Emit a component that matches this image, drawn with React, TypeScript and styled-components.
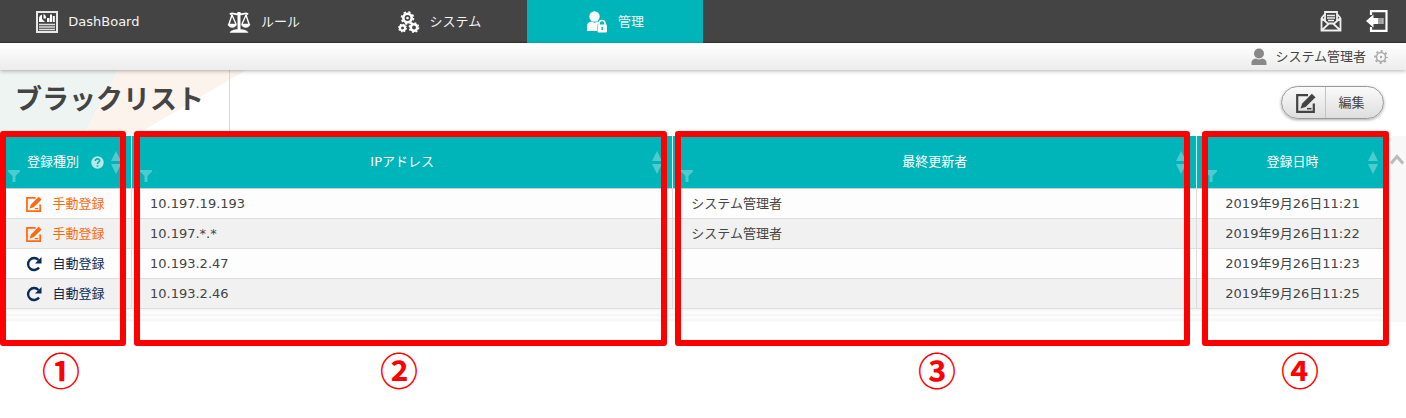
import React from 'react';
import styled, { createGlobalStyle } from 'styled-components';

const TEAL = '#00b5b9';

const GlobalStyle = createGlobalStyle`
  * { box-sizing: border-box; }
  body {
    margin: 0;
    background: #fff;
    color: #444;
    font: 13px/20px 'DejaVu Sans', 'Noto Sans CJK JP', sans-serif;
  }
  button { font: inherit; color: inherit; cursor: pointer; }
`;

const TopBar = styled.header`
  display: flex;
  justify-content: space-between;
  height: 43px;
  background: #444;
  border-bottom: 1px solid #333;
`;

const Menu = styled.nav`
  display: flex;
  width: 50%;
`;

const MenuItem = styled.a<{ $active?: boolean }>`
  display: flex;
  flex: 1;
  align-items: center;
  justify-content: center;
  gap: 10px;
  height: 43px;
  color: #f4f4f4;
  text-decoration: none;
  white-space: nowrap;
  background: ${(p) => (p.$active ? TEAL : 'transparent')};
`;

const TopActions = styled.div`
  display: flex;
  align-items: center;
  gap: 24px;
  padding-right: 18px;
`;

const IconButton = styled.button`
  display: flex;
  padding: 0;
  border: 0;
  background: none;
`;

const UserBar = styled.div`
  display: flex;
  align-items: center;
  justify-content: flex-end;
  gap: 8px;
  height: 27px;
  padding-right: 18px;
  background: linear-gradient(#fff, #ececec);
  box-shadow: 0 1px 4px rgba(0, 0, 0, 0.3);
  position: relative;
`;

const TitleRow = styled.div`
  display: flex;
  justify-content: space-between;
  height: 66px;
`;

const TitleArea = styled.div`
  display: grid;
`;

const TitleArt = styled.svg`
  grid-area: 1 / 1;
`;

const Title = styled.h1`
  grid-area: 1 / 1;
  margin: 0;
  padding: 10px 0 0 15px;
  font-size: 27px;
  line-height: 40px;
  font-weight: 700;
`;

const EditButton = styled.button`
  display: flex;
  align-items: stretch;
  width: 103px;
  height: 33px;
  margin: 16px 22px 0 0;
  padding: 0;
  border: 1px solid #999;
  border-radius: 17px;
  background: linear-gradient(#fafafa, #dedede);
  box-shadow: 0 1px 3px rgba(0, 0, 0, 0.35);
`;

const EditPart = styled.span<{ $divided?: boolean }>`
  display: flex;
  flex: ${(p) => (p.$divided ? '0 0 44px' : '1')};
  align-items: center;
  justify-content: center;
  padding: ${(p) => (p.$divided ? '0 0 0 4px' : '0 6px 0 0')};
  border-right: ${(p) => (p.$divided ? '1px solid #c4c4c4' : '0')};
`;

const ListArea = styled.main`
  position: relative;
`;

const ScrollPane = styled.div`
  display: flex;
  min-height: 186px;
  background: #f8f8f8;
`;

const TablePane = styled.div`
  flex: 1;
  background: repeating-linear-gradient(#fcfcfc 0 3px, #f6f6f6 3px 5px);
`;

const ScrollUp = styled.button`
  display: flex;
  align-self: flex-start;
  justify-content: center;
  width: 18px;
  padding: 18px 0 0;
  border: 0;
  background: none;
`;

const Table = styled.table`
  width: 100%;
  table-layout: fixed;
  border-collapse: separate;
  border-spacing: 0;
`;

const Col = styled.col<{ $w?: string }>`
  width: ${(p) => p.$w ?? 'auto'};
`;

const HeadCell = styled.th`
  height: 53px;
  padding: 0;
  background: ${TEAL};
  color: #fff;
  font-weight: 400;
  border-right: 1px solid #d4eeee;
  border-bottom: 1px solid #ccc;
  &:last-child { border-right: 0; }
`;

const HeadInner = styled.div`
  display: grid;
  grid-template-columns: 20px 1fr 14px;
  align-items: center;
  height: 52px;
  padding: 0 10px 0 4px;
`;

const HeadLabel = styled.span`
  display: flex;
  align-items: center;
  justify-content: center;
  gap: 12px;
  white-space: nowrap;
`;

const FilterButton = styled(IconButton)`
  align-self: end;
  padding: 0 4px 6px;
`;

const SortButton = styled(IconButton)`
  justify-self: end;
`;

const Row = styled.tr`
  background: #fdfdfd;
  &:nth-child(even) { background: #f1f1f1; }
`;

const Cell = styled.td<{ $center?: boolean }>`
  height: 30px;
  padding: ${(p) => (p.$center ? '0' : '0 18px')};
  text-align: ${(p) => (p.$center ? 'center' : 'left')};
  border-right: 1px solid #ddd;
  border-bottom: 1px solid #ddd;
  &:last-child { border-right: 0; }
`;

const Kind = styled.span<{ $manual: boolean }>`
  display: flex;
  align-items: center;
  justify-content: center;
  gap: 10px;
  color: ${(p) => (p.$manual ? '#ff6a13' : '#0b2a55')};
`;

const Frames = styled.div`
  position: absolute;
  inset: -5px 17px -24px 0;
  display: grid;
  grid-template-columns: 126px minmax(0, 533fr) minmax(0, 515fr) 191px;
  column-gap: 8px;
  pointer-events: none;
`;

const Frame = styled.div<{ $last?: boolean }>`
  border: 6px solid #f00;
  border-radius: 3px;
  margin-left: ${(p) => (p.$last ? '4px' : '0')};
`;

const Numbers = styled.div`
  display: grid;
  grid-template-columns: 122px minmax(0, 554fr) minmax(0, 522fr) 204px;
  padding: 22px 4px 0 0;
  color: #f00;
  font: 700 38px/50px 'Noto Sans CJK JP', sans-serif;
  text-align: center;
`;

const DashboardIcon = () => (
  <svg width="22" height="22" viewBox="0 0 22 22" fill="none" aria-hidden>
    <rect x="1" y="1" width="20" height="20" stroke="#e8e8e8" strokeWidth="2" />
    <path d="M3 11V7a4 4 0 0 1 3-3.500V8l3 3zM7.500 3a4.500 4.500 0 0 1 2.500 4.500H7.500zM11 11V7h2.500v4zM14 11V3.500h2V11zM16.800 11V5h2v6z" fill="#fff" />
    <path d="M3 13.500h16M3 16h16M3 18.500h16" stroke="#ddd" strokeWidth="1.300" />
  </svg>
);

const ScaleIcon = () => (
  <svg width="24" height="22" viewBox="0 0 24 22" fill="none" stroke="#fff" aria-hidden>
    <path d="M12 1v18" strokeWidth="3" />
    <path d="M3 3.500c3-3 6 1.500 9-1 3 2.500 6-2 9 1" strokeWidth="2" />
    <path d="M5 4 2 13M5 4l4 9M19 4l-4 9M19 4l3 9" strokeWidth="1.400" />
    <path d="M1 13h8.500c0 4.500-8.500 4.500-8.500 0zM14.500 13H23c0 4.500-8.500 4.500-8.500 0zM3 21.500c1-2.500 6-3 9-3s8 .5 9 3z" fill="#fff" strokeWidth=".5" />
  </svg>
);

const GearsIcon = () => (
  <svg width="22" height="22" viewBox="0 0 22 22" fill="none" stroke="#fff" aria-hidden>
    <circle cx="9.500" cy="7" r="4.200" strokeWidth="2.600" />
    <circle cx="9.500" cy="7" r="6" strokeWidth="1.600" strokeDasharray="2.356 2.356" />
    <circle cx="9.500" cy="7" r="1.300" fill="#fff" stroke="none" />
    <circle cx="4.500" cy="17" r="2.600" strokeWidth="2.200" />
    <circle cx="4.500" cy="17" r="3.800" strokeWidth="1.200" strokeDasharray="1.490 1.490" />
    <circle cx="16" cy="16.500" r="3.200" strokeWidth="2.500" />
    <circle cx="16" cy="16.500" r="4.700" strokeWidth="1.400" strokeDasharray="1.845 1.845" />
  </svg>
);

const AdminIcon = () => (
  <svg width="22" height="22" viewBox="0 0 22 22" fill="#fff" aria-hidden>
    <circle cx="8.500" cy="5.500" r="5.200" />
    <path d="M1 20v-5c0-3 2-4 4.500-4.500 2 1.500 4 1.500 6 0l2 .7c-2 1.500-2.500 3-2.500 4.800V20z" />
    <path d="M13 14v-1.500a3 3 0 0 1 6 0V14" fill="none" stroke="#fff" strokeWidth="1.500" />
    <rect x="11.500" y="13.500" width="9.500" height="8" rx="1" />
    <path d="M16.200 16v3" stroke={TEAL} strokeWidth="1.400" />
  </svg>
);

const MailIcon = () => (
  <svg width="22" height="22" viewBox="0 0 22 22" fill="none" stroke="#eee" strokeWidth="1.800" aria-hidden>
    <path d="M1.500 8 5 4M20.500 8 17 4M1.500 8v12.500h19V8M1.500 8 9 14.500M20.500 8 13 14.500M1.500 20.500 9 13.500h4l7.500 7" />
    <path d="M5 11V2h12v9" />
    <path d="M7 5.500h8M7 8h8M8 10.500h6" strokeWidth="1.300" />
  </svg>
);

const LogoutIcon = () => (
  <svg width="22" height="22" viewBox="0 0 22 22" aria-hidden>
    <path d="M5 5V1.200h15.500v19.600H5V17" fill="none" stroke="#fff" strokeWidth="2.200" />
    <path d="M0 11 7.500 4.500V8H12v6H7.500v3.500z" fill="#fff" />
    <path d="M13 8v6M15 8v6M16.900 8v6" stroke="#ddd" strokeWidth="1.200" />
  </svg>
);

const UserIcon = () => (
  <svg width="16" height="18" viewBox="0 0 16 18" fill="#888" aria-hidden>
    <circle cx="8" cy="5.500" r="5" />
    <path d="M.5 17v-2.500c0-2.500 2-3.500 4.500-4 2 1.300 4 1.300 6 0 2.500.5 4.500 1.500 4.500 4V17z" />
  </svg>
);

const GearIcon = () => (
  <svg width="14" height="14" viewBox="0 0 14 14" fill="none" stroke="#aaa" aria-hidden>
    <circle cx="7" cy="7" r="4.500" strokeWidth="1.500" />
    <circle cx="7" cy="7" r="6" strokeWidth="1.800" strokeDasharray="2.100 2.612" strokeDashoffset="1" />
    <circle cx="7" cy="7" r="1.200" fill="#aaa" stroke="none" />
  </svg>
);

const EditIcon = ({ size }: { size: number }) => (
  <svg width={size} height={size} viewBox="0 0 20 20" fill="none" stroke="currentColor" aria-hidden>
    <path d="M12 2.200H1.200v16.600h16.600V10.500" strokeWidth="2.200" />
    <path d="M4.500 15.500 6.200 10.500 15.800.8 19.500 4.300 9.600 14z" fill="currentColor" stroke="none" />
    <path d="M11 15.700h4.500" strokeWidth="1.600" />
  </svg>
);

const RefreshIcon = () => (
  <svg width="16" height="16" viewBox="0 0 16 16" fill="none" stroke="currentColor" aria-hidden>
    <path d="M13 11.500A6 6 0 1 1 12.500 4" strokeWidth="2.400" />
    <path d="M15.500 1v6.500H9z" fill="currentColor" stroke="none" />
  </svg>
);

const HelpIcon = () => (
  <svg width="13" height="13" viewBox="0 0 13 13" fill="none" aria-hidden>
    <circle cx="6.500" cy="6.500" r="6.200" fill="#b8e8e9" />
    <path d="M4.300 5c0-3 4.500-2.700 4.300-.2C8.500 6.300 6.500 6 6.500 8M6.500 9.200v1.600" stroke={TEAL} strokeWidth="1.700" />
  </svg>
);

const SortIcon = () => (
  <svg width="10" height="23" viewBox="0 0 10 23" fill="#4dcbce" aria-hidden>
    <path d="M5 0l5 10H0zM0 13h10L5 23z" />
  </svg>
);

const FilterIcon = () => (
  <svg width="12" height="12" viewBox="0 0 12 12" fill="#4dcbce" aria-hidden>
    <path d="M0 0h12v1.500L7.500 6v6h-3V6L0 1.500z" />
  </svg>
);

const columns = [
  { label: '登録種別', width: '132px', help: true },
  { label: 'IPアドレス', width: '39%' },
  { label: '最終更新者' },
  { label: '登録日時', width: '191px' },
];

const entries = [
  { manual: true, ip: '10.197.19.193', by: 'システム管理者', at: '2019年9月26日11:21' },
  { manual: true, ip: '10.197.*.*', by: 'システム管理者', at: '2019年9月26日11:22' },
  { manual: false, ip: '10.193.2.47', by: '', at: '2019年9月26日11:23' },
  { manual: false, ip: '10.193.2.46', by: '', at: '2019年9月26日11:25' },
];

export default function App() {
  return (
    <>
      <GlobalStyle />
      <TopBar>
        <Menu>
          <MenuItem href="#dashboard"><DashboardIcon />DashBoard</MenuItem>
          <MenuItem href="#rules"><ScaleIcon />ルール</MenuItem>
          <MenuItem href="#system"><GearsIcon />システム</MenuItem>
          <MenuItem href="#admin" $active><AdminIcon />管理</MenuItem>
        </Menu>
        <TopActions>
          <IconButton aria-label="メール"><MailIcon /></IconButton>
          <IconButton aria-label="ログアウト"><LogoutIcon /></IconButton>
        </TopActions>
      </TopBar>
      <UserBar>
        <UserIcon />
        <span>システム管理者</span>
        <IconButton aria-label="設定"><GearIcon /></IconButton>
      </UserBar>
      <TitleRow>
        <TitleArea>
          <TitleArt width="246" height="66" viewBox="0 0 246 66" aria-hidden>
            <path d="M0 0h118L83 66H0z" fill="#eef4f1" />
            <path d="M118 0h128L134 66H83z" fill="#fbf3ec" />
            <path d="M229.500 0v61" stroke="#d8d8d8" strokeWidth="1" />
          </TitleArt>
          <Title>ブラックリスト</Title>
        </TitleArea>
        <EditButton>
          <EditPart $divided><EditIcon size={20} /></EditPart>
          <EditPart>編集</EditPart>
        </EditButton>
      </TitleRow>
      <ListArea>
        <ScrollPane>
          <TablePane>
            <Table>
              <colgroup>
                {columns.map((c) => <Col key={c.label} $w={c.width} />)}
              </colgroup>
              <thead>
                <tr>
                  {columns.map((c) => (
                    <HeadCell key={c.label} scope="col">
                      <HeadInner>
                        <FilterButton aria-label="絞り込み"><FilterIcon /></FilterButton>
                        <HeadLabel>{c.label}{c.help && <HelpIcon />}</HeadLabel>
                        <SortButton aria-label="並べ替え"><SortIcon /></SortButton>
                      </HeadInner>
                    </HeadCell>
                  ))}
                </tr>
              </thead>
              <tbody>
                {entries.map((e) => (
                  <Row key={e.ip}>
                    <Cell $center>
                      <Kind $manual={e.manual}>
                        {e.manual ? <EditIcon size={16} /> : <RefreshIcon />}
                        {e.manual ? '手動登録' : '自動登録'}
                      </Kind>
                    </Cell>
                    <Cell>{e.ip}</Cell>
                    <Cell>{e.by}</Cell>
                    <Cell $center>{e.at}</Cell>
                  </Row>
                ))}
              </tbody>
            </Table>
          </TablePane>
          <ScrollUp aria-label="上へ">
            <svg width="14" height="11" viewBox="0 0 14 11" fill="none" stroke="#bbb" strokeWidth="3" aria-hidden>
              <path d="M1 9.500l6-7 6 7" />
            </svg>
          </ScrollUp>
        </ScrollPane>
        <Frames>
          <Frame />
          <Frame />
          <Frame />
          <Frame $last />
        </Frames>
      </ListArea>
      <Numbers>
        <span>①</span>
        <span>②</span>
        <span>③</span>
        <span>④</span>
      </Numbers>
    </>
  );
}
